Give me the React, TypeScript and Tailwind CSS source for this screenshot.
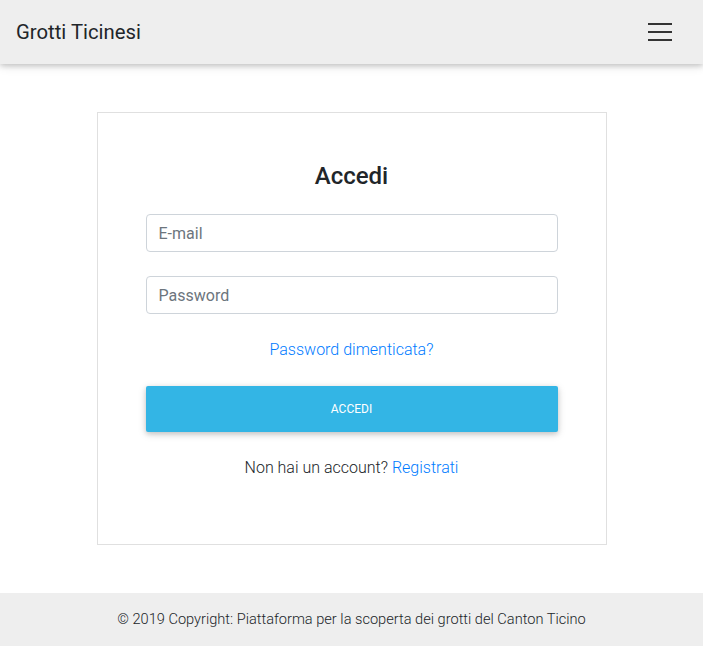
export default function App() {
  return (
    <div className="min-h-screen flex flex-col bg-white font-['Roboto',sans-serif] font-light text-[#212529]">
      <header className="h-16 bg-[#eeeeee] flex items-center justify-between px-4 shadow-[0_2px_5px_0_rgba(0,0,0,0.16),0_2px_10px_0_rgba(0,0,0,0.12)] relative z-10">
        <span className="text-[20.3px] font-normal text-[#212529]">Grotti Ticinesi</span>
        <button className="w-[24px] h-[18px] flex flex-col justify-between mr-[15px]">
          <span className="block h-[2px] w-full bg-[#333]" />
          <span className="block h-[2px] w-full bg-[#333]" />
          <span className="block h-[2px] w-full bg-[#333]" />
        </button>
      </header>

      <main className="flex-1 flex justify-center pt-12 pb-12">
        <div className="w-[510px] h-[433px] border border-[#e0e0e0] px-12 pt-[47px] flex flex-col">
          <h1 className="text-[24px] leading-8 font-medium text-center text-[#212529]">Accedi</h1>
          <input
            className="mt-[22px] h-[38px] w-full border border-[#ced4da] rounded-[4px] px-3 text-[16px] font-normal placeholder:text-[#6c757d] outline-none"
            placeholder="E-mail"
          />
          <input
            type="password"
            className="mt-6 h-[38px] w-full border border-[#ced4da] rounded-[4px] px-3 text-[16px] font-normal placeholder:text-[#6c757d] outline-none"
            placeholder="Password"
          />
          <a href="#" className="mt-6 text-center text-[16px] leading-6 text-[#007bff]">Password dimenticata?</a>
          <button className="mt-6 h-[46px] w-full rounded-[2px] bg-[#33b5e5] text-white text-[12px] font-normal uppercase shadow-[0_2px_5px_0_rgba(0,0,0,0.16),0_2px_10px_0_rgba(0,0,0,0.12)]">
            Accedi
          </button>
          <p className="mt-6 text-center text-[16px] leading-6">
            Non hai un account? <a href="#" className="text-[#007bff]">Registrati</a>
          </p>
        </div>
      </main>

      <footer className="h-[53px] bg-[#eeeeee] flex items-center justify-center text-[14.6px] text-[#212529]">
        © 2019 Copyright: Piattaforma per la scoperta dei grotti del Canton Ticino
      </footer>
    </div>
  );
}
